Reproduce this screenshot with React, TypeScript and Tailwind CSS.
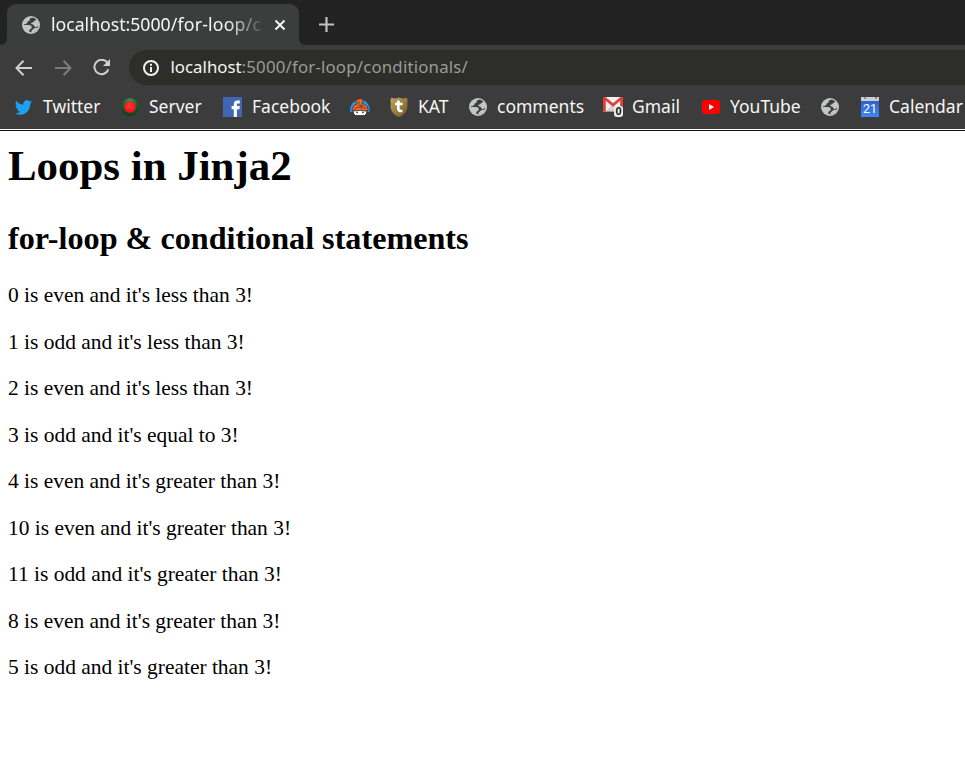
import React from "react";

const ui = "font-['Noto_Sans','Open_Sans',sans-serif] whitespace-pre";

function Globe({ dark = "#3c3d3d" }: { dark?: string }) {
  return (
    <svg width="18" height="18" viewBox="0 0 18 18" className="block shrink-0">
      <circle cx="9" cy="9" r="9" fill="#c3c4c4" />
      <path d="M9.2 1.9C11 1.6 13 2.3 14.2 3.6C13.8 5 12.4 4.4 11.8 5.4C11.3 6.6 9.8 6.2 9.1 7C8.7 8.4 10.6 8.3 11.6 8.9C12.4 9.6 12.1 10.7 13.3 11C14.4 11.1 15.3 10.5 16.1 9.4C16.1 12.9 13.4 16 9.8 16.2C7.9 16.4 6.7 15.7 7.3 14.3C7.8 13.1 9.8 12.9 9.8 11.2C9.7 9.6 8 9.1 6.3 9.1H1.8V8.2C3 8.3 4.4 7.9 5.1 7C5.7 6 5.6 5.3 6.8 5.1C8.2 4.8 6.9 2.5 9.2 1.9Z" fill={dark} />
      <path d="M12.8 12.1C11.2 12.4 11.3 13.9 9.6 14.6L9.4 16.5C12.9 16.4 15.4 14.4 16.3 11.5Z" fill="#c3c4c4" />
    </svg>
  );
}

function Twitter() {
  return (
    <svg width="17" height="15" viewBox="0 2 24 20" preserveAspectRatio="none" className="block">
      <path fill="#1da1f2" d="M23.95 4.57a10 10 0 01-2.82.77 4.96 4.96 0 002.16-2.72c-.95.56-2 .96-3.13 1.19a4.92 4.92 0 00-8.38 4.48C7.69 8.1 4.07 6.13 1.64 3.16a4.92 4.92 0 001.52 6.57 4.9 4.9 0 01-2.23-.61v.06a4.92 4.92 0 003.95 4.83 5 5 0 01-2.21.08 4.94 4.94 0 004.6 3.42A9.87 9.87 0 010 19.54a13.99 13.99 0 007.55 2.21c9.05 0 14-7.5 14-13.98 0-.21 0-.42-.02-.63A9.94 9.94 0 0024 4.59z" />
    </svg>
  );
}

function ServerIcon() {
  return (
    <div className="w-[18px] h-[18px] rounded-full bg-[radial-gradient(circle_at_50%_15%,#3f9158,#14602e_45%,#043515)] p-[3px]">
      <div className="size-[12px] rounded-full bg-[radial-gradient(circle_at_50%_40%,#ff3838,#ee1620_60%,#b30c12)]" />
    </div>
  );
}

function Facebook() {
  return (
    <svg width="19" height="20" viewBox="0 0 19 20" className="block">
      <path fill="#4267b2" d="M0 0H19V20H0Z" />
      <path fill="#fff" d="M10.8 20V12.2H8.6V9H10.8V7.1C10.8 4.7 12.1 3.5 14.3 3.5H16.8V6.4H15.2C14.2 6.4 13.9 6.8 13.9 7.8V9H16.8L16.4 12.2H13.9V20Z" />
    </svg>
  );
}

function Turban() {
  return (
    <svg width="20" height="18" viewBox="0 0 20 18" className="block">
      <path fill="#2196f3" d="M0 14C-.5 7 4 1.5 10 1.5S20.5 7 19.5 14H0Z" />
      <path fill="#f4652a" stroke="#402418" strokeWidth=".7" d="M2 12.8C2 9 4.5 6.5 7 6L5 4L7.5 1.2L11 .3L13.5 3L12 5.5C15.5 6 18.3 9 18 13L10 12.5Z" />
      <path stroke="#5a2a14" strokeWidth=".7" fill="none" d="M4 11.5Q8 7.5 13 10.5M8 7Q13 7 16 11" />
      <path fill="#1c7a35" d="M7.5 3.5H9.5V5.5H7.5ZM10.5 6.5H12.5V9H10.5Z" />
      <path fill="#fff" stroke="#28201b" strokeWidth=".7" d="M3 13Q10 11.5 17 13.2L16.2 16L14.5 17.5H5.5L3.8 16Z" />
      <path fill="#28201b" d="M6 13.7H8V14.7H6ZM12 13.7H14V14.7H12Z" />
    </svg>
  );
}

function Shield() {
  return (
    <svg width="18" height="20" viewBox="0 0 18 20" className="block">
      <defs>
        <linearGradient id="shield-gold" x1="0" y1="0" x2="1" y2="1">
          <stop stopColor="#bda467" />
          <stop offset=".5" stopColor="#9c8042" />
          <stop offset="1" stopColor="#69521f" />
        </linearGradient>
      </defs>
      <path fill="url(#shield-gold)" d="M1.5.5Q5 2.2 9 .6Q13 2.2 16.5.5Q17 2 17.8 3C16.6 5.5 18.2 9 16.8 13Q15 17.5 9 20Q3 17.5 1.2 13C-.2 9 1.4 5.5.2 3Q1 2 1.5.5Z" />
      <path fill="none" stroke="#fff" strokeWidth="2.7" d="M8.3 3.5V12Q8.3 14.6 12.4 13.8M5 7H12.5" />
    </svg>
  );
}

function Gmail() {
  return (
    <div className="relative w-[20px] h-[20px]">
      <svg width="20" height="15" viewBox="0 0 20 15" className="block">
        <path fill="#f1efef" d="M0 0H20V14.5H0Z" />
        <path fill="#d5d2d2" d="M3 14L9 8L10 9L11 8L17 14Z" />
        <path fill="#df3e3a" d="M0 0H2.5L10 6.3L17.5 0H20V14.5H17.2V3.7L10 9.8L2.8 3.7V14.5H0Z" />
      </svg>
      <div className="absolute left-[11px] top-[9px] w-[9px] h-[11px] rounded-[3px] bg-[#eee] text-[#111] text-[11px] leading-[11px] text-center font-bold font-['Liberation_Sans',sans-serif]">0</div>
    </div>
  );
}

function YouTube() {
  return (
    <svg width="18" height="14" viewBox="0 0 18 14" className="block">
      <rect width="18" height="14" rx="3.2" fill="#f00" />
      <path fill="#fff" d="M7 4L12 7L7 10Z" />
    </svg>
  );
}

function Calendar() {
  return (
    <div className="w-[18px] h-[20px] bg-[#3367d6]">
      <div className="h-[4px] bg-[#c9cdd4] flex justify-between px-[2.5px]">
        <div className="w-[2px] h-[2px] bg-[#8a8f98]" />
        <div className="w-[2px] h-[2px] bg-[#8a8f98]" />
      </div>
      <div className="h-[16px] bg-linear-to-b from-[#2f62cc] to-[#4285f4] text-white text-[12.5px] leading-[16px] text-center font-['Roboto',sans-serif]">21</div>
    </div>
  );
}

const bookmarks = [
  { icon: <Twitter />, text: "Twitter", box: "w-[106px]", lead: "w-[28px]" },
  { icon: <ServerIcon />, text: "Server", box: "w-[102px]", lead: "w-[28px]" },
  { icon: <Facebook />, text: "Facebook", box: "w-[127px]", lead: "w-[29px]" },
  { icon: <Turban />, text: "", box: "w-[40px]", lead: "w-[29px]" },
  { icon: <Shield />, text: "KAT", box: "w-[79px]", lead: "w-[28px]" },
  { icon: <Globe />, text: "comments", box: "w-[134px]", lead: "w-[28px]" },
  { icon: <Gmail />, text: "Gmail", box: "w-[99px]", lead: "w-[29px]" },
  { icon: <YouTube />, text: "YouTube", box: "w-[119px]", lead: "w-[28px]" },
  { icon: <Globe />, text: "", box: "w-[40px]", lead: "w-[28px]" },
  { icon: <Calendar />, text: "Calendar", box: "w-[110px]", lead: "w-[28px]" },
];

const lines = [
  "0 is even and it's less than 3!",
  "1 is odd and it's less than 3!",
  "2 is even and it's less than 3!",
  "3 is odd and it's equal to 3!",
  "4 is even and it's greater than 3!",
  "10 is even and it's greater than 3!",
  "11 is odd and it's greater than 3!",
  "8 is even and it's greater than 3!",
  "5 is odd and it's greater than 3!",
];

export default function App() {
  return (
    <div className={"w-[965px] h-[766px] overflow-hidden bg-white " + ui}>
      <div className="bg-[#222] h-[45px] flex pt-1">
        <svg width="7" height="41" viewBox="0 0 7 41" className="shrink-0">
          <path d="M7 34Q7 41 0 41H7Z" fill="#3c3d3d" />
        </svg>
        <div className="w-[292px] h-[41px] rounded-t-[9px] bg-[#3c3d3d] flex items-center pl-[15px]">
          <Globe />
          <div className="ml-[11px] -mt-[2px] w-[217px] text-[17.7px] tracking-[-0.02px] leading-[26px] text-[#f5f5f5] mask-[linear-gradient(to_right,black_176px,transparent_215px)]">
            localhost:5000<span className="tracking-[0.2px]">/for-loop/c</span>
          </div>
          <svg width="12" height="12" viewBox="0 0 12 12" className="ml-[6px]">
            <path d="M1.5 1.5L10.5 10.5M10.5 1.5L1.5 10.5" stroke="#f5f5f5" strokeWidth="2" />
          </svg>
        </div>
        <svg width="7" height="41" viewBox="0 0 7 41" className="shrink-0">
          <path d="M0 34Q0 41 7 41H0Z" fill="#3c3d3d" />
        </svg>
        <svg width="15" height="15" viewBox="0 0 15 15" className="ml-[13px] mt-[13px]">
          <path d="M7.5 0V15M0 7.5H15" stroke="#c2c2c2" strokeWidth="2.2" />
        </svg>
      </div>

      <div className="h-[45px] bg-[#3c3c3c] flex items-center">
        <svg width="17" height="16" viewBox="0 0 17 16" className="ml-[15px] shrink-0" fill="none" stroke="#d0d0d0" strokeWidth="2">
          <path d="M8.5 .8L1.5 8L8.5 15.2M1.5 8H17" />
        </svg>
        <svg width="17" height="16" viewBox="0 0 17 16" className="ml-[23px] shrink-0" fill="none" stroke="#7c7c7c" strokeWidth="2">
          <path d="M8.5 .8L15.5 8L8.5 15.2M0 8H15.5" />
        </svg>
        <svg width="18" height="17" viewBox="0 0 18 17" className="ml-[21px] shrink-0" fill="none" stroke="#d0d0d0" strokeWidth="2">
          <path d="M14.2 3.4A7.2 7.2 0 1 0 15.4 10.4" />
          <path d="M17 0V7H10Z" fill="#d0d0d0" stroke="none" />
        </svg>
        <div className="ml-[18px] h-[35px] flex-1 rounded-l-full bg-[#2d2e29] flex items-center pl-[14px]">
          <svg width="16" height="16" viewBox="0 0 16 16" className="shrink-0">
            <circle cx="8" cy="8" r="7" fill="none" stroke="#f0f0f0" strokeWidth="2" />
            <path d="M7 3.8H9V5.8H7ZM7 7H9V12H7Z" fill="#f0f0f0" />
          </svg>
          <div className="ml-[11.5px] -mt-[2px] text-[16.8px] leading-[26px] tracking-[0.2px] text-[#9b9b99]">
            <span className="text-[#f5f5f5] tracking-[0.02px]">localhost</span>:5000/for-loop/conditionals/
          </div>
        </div>
      </div>

      <div className="h-[39px] bg-[#3c3c3c] flex items-start pl-[15px] pt-[4px]">
        {bookmarks.map((b, i) => (
          <div key={i} className={"flex h-[26px] items-center shrink-0 " + b.box}>
            <div className={"shrink-0 " + b.lead}>{b.icon}</div>
            <div className="-mt-[2px] text-[17.5px] leading-[26px] text-[#f5f5f5]">{b.text}</div>
          </div>
        ))}
      </div>
      <div className="h-px bg-white" />
      <div className="h-px bg-[#111]" />

      <div className="pl-2 text-black font-['Liberation_Serif',serif]">
        <h1 className="text-[42.9px] leading-[49px] font-bold mt-[10px]">Loops in Jinja2</h1>
        <h2 className="text-[32.17px] leading-[37px] font-bold mt-[30px]">for-loop &amp; conditional statements</h2>
        <div className="mt-[26px]">
          {lines.map((t) => (
            <p key={t} className="text-[21.45px] leading-[25px] mb-[21.5px]">{t}</p>
          ))}
        </div>
      </div>
    </div>
  );
}
